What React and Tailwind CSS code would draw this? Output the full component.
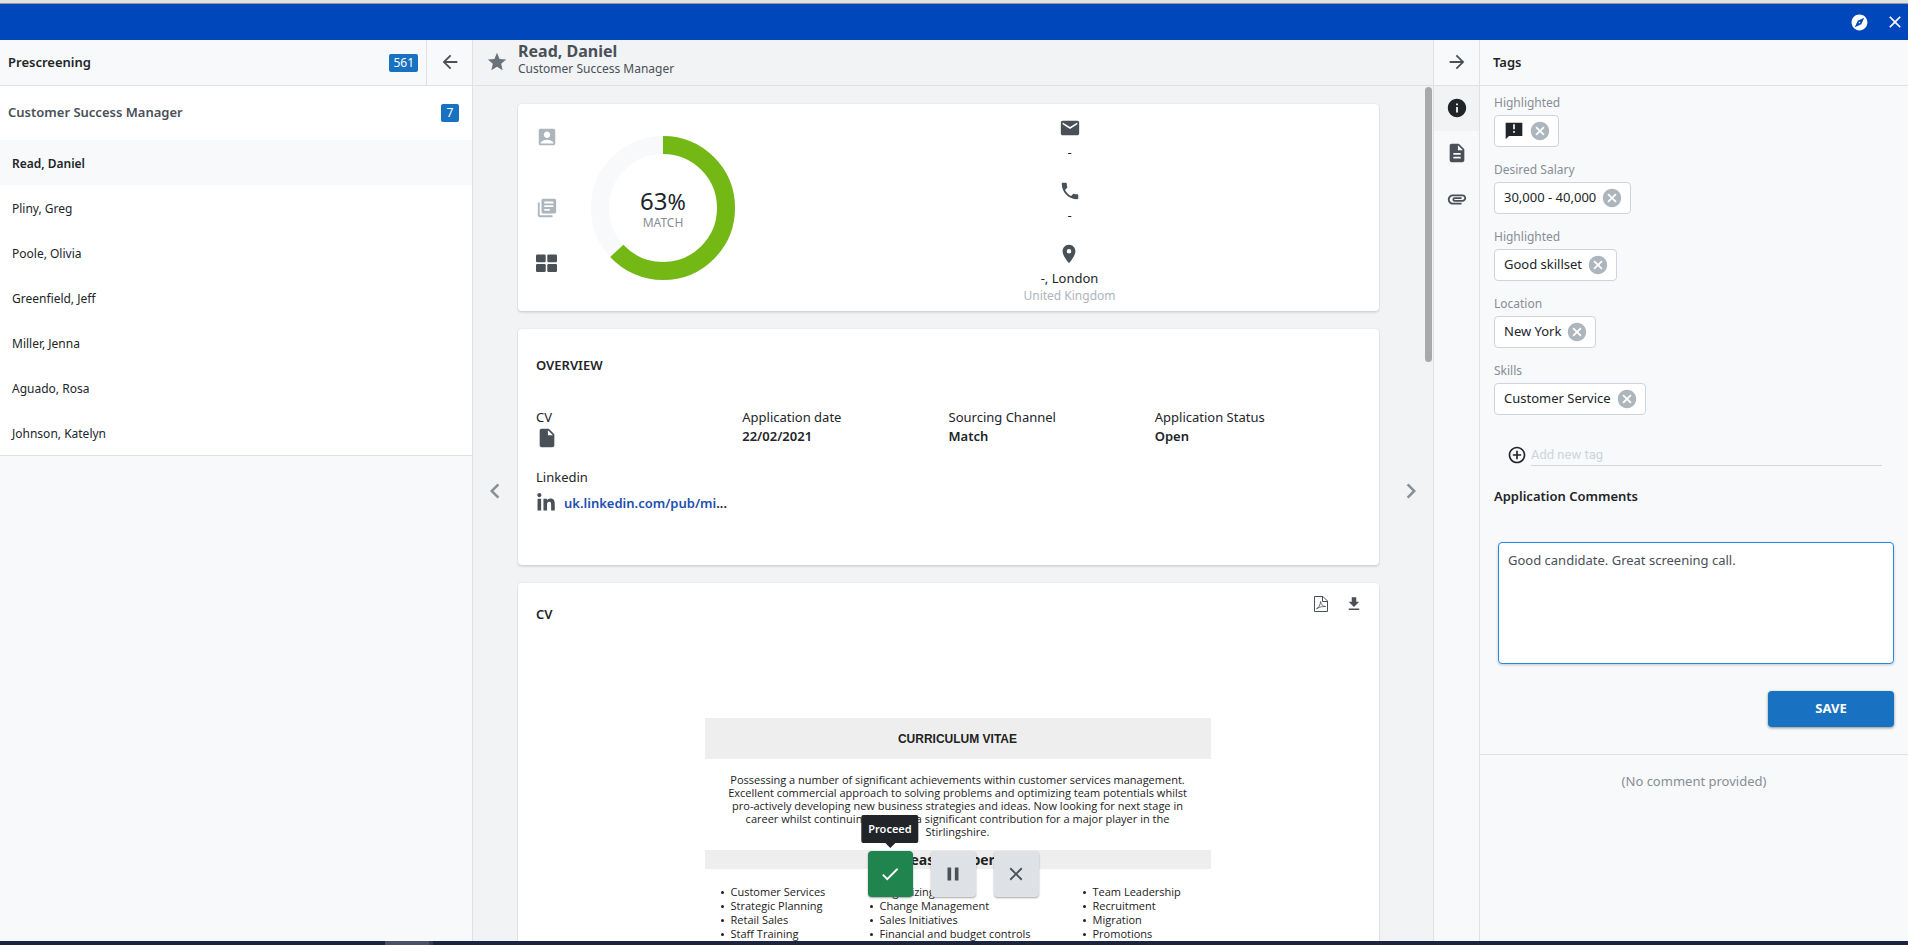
import React from 'react';
import {
  MdAccountBox,
  MdAddCircleOutline,
  MdArrowBack,
  MdArrowForward,
  MdAttachment,
  MdCancel,
  MdCheck,
  MdChevronLeft,
  MdChevronRight,
  MdClose,
  MdDescription,
  MdEmail,
  MdExplore,
  MdInfo,
  MdInsertDriveFile,
  MdLibraryBooks,
  MdPause,
  MdPhone,
  MdPlace,
  MdStar,
} from 'react-icons/md';
import { FaLinkedinIn } from 'react-icons/fa';

const candidates = [
  'Read, Daniel',
  'Pliny, Greg',
  'Poole, Olivia',
  'Greenfield, Jeff',
  'Miller, Jenna',
  'Aguado, Rosa',
  'Johnson, Katelyn',
];

const tags = [
  { label: 'Highlighted', icon: true },
  { label: 'Desired Salary', value: '30,000 - 40,000' },
  { label: 'Highlighted', value: 'Good skillset' },
  { label: 'Location', value: 'New York' },
  { label: 'Skills', value: 'Customer Service' },
];

const summary = [
  'Possessing a number of significant achievements within customer services management.',
  'Excellent commercial approach to solving problems and optimizing team potentials whilst',
  'pro-actively developing new business strategies and ideas. Now looking for next stage in',
  'career whilst continuing to make a significant contribution for a major player in the',
  'Stirlingshire.',
];

const expertise = [
  ['Customer Services', 'Strategic Planning', 'Retail Sales', 'Staff Training'],
  ['Organizing', 'Change Management', 'Sales Initiatives', 'Financial and budget controls'],
  ['Team Leadership', 'Recruitment', 'Migration', 'Promotions'],
];

function TilesIcon() {
  return (
    <svg width="22" height="22" viewBox="0 0 22 22" fill="currentColor" aria-hidden="true">
      <rect x="0" y="2.500" width="9.700" height="7.700" rx="1.200" />
      <rect x="11.300" y="2.500" width="9.700" height="7.700" rx="1.200" />
      <rect x="0" y="12" width="9.700" height="8" rx="1.200" />
      <rect x="11.300" y="12" width="9.700" height="8" rx="1.200" />
    </svg>
  );
}

function AlertIcon() {
  return (
    <svg width="20" height="20" viewBox="0 0 24 24" fill="currentColor" aria-hidden="true">
      <path d="M22 2H2v20l4-4h16V2zm-9 12h-2v-2h2v2zm0-4h-2V4h2v6z" />
    </svg>
  );
}

function PdfIcon() {
  return (
    <svg width="16" height="18" viewBox="0 0 16 18" fill="none" stroke="currentColor" aria-hidden="true">
      <path d="M1.5 1.5h8.5l4.5 4.5v10.5h-13z" />
      <path d="M9.5 1.5v5h5" />
      <path
        d="M3.500 13.800c2.200-1.200 3.800-3.800 4.100-7.300.3 2.600 2 4.900 5 5-2.600-.1-6 .2-9.100 2.300z"
        strokeWidth="0.8"
      />
    </svg>
  );
}

function DownloadIcon() {
  return (
    <svg width="18" height="18" viewBox="0 0 24 24" fill="currentColor" aria-hidden="true">
      <path d="M5 20h14v-2H5v2zM19 9h-4V3H9v6H5l7 7 7-7z" />
    </svg>
  );
}

function TopBar() {
  return (
    <header className="shrink-0">
      <div className="h-1 border-b border-[#999999] bg-[#dfe1e3]" />
      <div className="flex h-9 items-center justify-end gap-4 bg-[#0047bb] pr-[3px] text-white">
        <button aria-label="Explore" type="button">
          <MdExplore size={19} />
        </button>
        <button aria-label="Close" type="button">
          <MdClose size={20} />
        </button>
      </div>
    </header>
  );
}

function Sidebar() {
  return (
    <aside className="w-[473px] shrink-0 border-r border-[#dee2e6] bg-[#f8f9fb]">
      <div className="flex h-[46px] border-b border-[#dee2e6]">
        <div className="flex flex-1 items-center justify-between pr-2 pl-2">
          <h2 className="text-[13px] font-semibold">Prescreening</h2>
          <span className="h-[18px] rounded-xs bg-[#1971c2] px-1 text-[12px] leading-[18px] text-white">
            561
          </span>
        </div>
        <button
          type="button"
          aria-label="Collapse list"
          className="flex w-[46px] items-center justify-center border-l border-[#dee2e6] pb-px text-[#495057]"
        >
          <MdArrowBack size={22} />
        </button>
      </div>
      <div className="border-b border-[#dee2e6] bg-white">
        <div className="flex h-[54px] items-center justify-between pr-[13px] pl-2">
          <h3 className="text-[13px] font-semibold text-[#495057]">Customer Success Manager</h3>
          <span className="h-[18px] w-[18px] rounded-xs bg-[#1971c2] text-center text-[12px] leading-[18px] text-white">
            7
          </span>
        </div>
        <ul>
          {candidates.map((name, i) => (
            <li key={name}>
              <button
                type="button"
                className={
                  i === 0
                    ? 'flex h-[45px] w-full items-center bg-[#f8f9fb] px-3 pt-[2px] text-[12px] font-semibold'
                    : 'flex h-[45px] w-full items-center px-3 pt-[2px] text-[12px]'
                }
              >
                {name}
              </button>
            </li>
          ))}
        </ul>
      </div>
    </aside>
  );
}

function MatchCard() {
  const radius = 63;
  const length = 2 * Math.PI * radius;
  return (
    <section className="flex rounded-sm bg-white shadow-[0_1px_3px_rgba(0,0,0,0.2)]">
      <div className="flex w-[55px] flex-col pt-[22px] pl-[18px] text-[#adb5bd]">
        <button type="button" aria-label="Profile" className="w-[22px]">
          <MdAccountBox size={22} />
        </button>
        <button type="button" aria-label="Documents" className="mt-[49px] w-[22px]">
          <MdLibraryBooks size={22} />
        </button>
        <button type="button" aria-label="Overview tiles" className="mt-[33px] w-[22px] text-[#495057]">
          <TilesIcon />
        </button>
      </div>
      <div className="flex w-[187px] items-center justify-start pl-[18px]">
        <div className="relative">
          <svg width="144" height="144" viewBox="0 0 144 144" fill="none" aria-hidden="true">
            <circle cx="72" cy="72" r={radius} stroke="#f8f9fb" strokeWidth="18" />
            <circle
              cx="72"
              cy="72"
              r={radius}
              stroke="#74b816"
              strokeWidth="18"
              strokeDasharray={`${length * 0.63} ${length}`}
              transform="rotate(-90 72 72)"
            />
          </svg>
          <div className="absolute inset-0 flex flex-col items-center justify-center pt-1">
            <p className="text-[24px] leading-[26px]">
              63<span className="text-[22px]">%</span>
            </p>
            <p className="text-[12px] leading-[18px] text-[#868e96]">MATCH</p>
          </div>
        </div>
      </div>
      <ul className="flex flex-1 flex-col items-center gap-[19px] pt-[13px] pb-[6px] text-[13px] leading-[18px]">
        <li className="flex flex-col items-center gap-1">
          <MdEmail size={22} className="text-[#495057]" />
          <span>-</span>
        </li>
        <li className="flex flex-col items-center gap-1">
          <MdPhone size={22} className="text-[#495057]" />
          <span>-</span>
        </li>
        <li className="flex flex-col items-center">
          <MdPlace size={22} className="mb-1 text-[#495057]" />
          <span>-, London</span>
          <span className="text-[12px] text-[#adb5bd]">United Kingdom</span>
        </li>
      </ul>
    </section>
  );
}

function OverviewCard() {
  return (
    <section className="rounded-sm bg-white px-[18px] pt-[26px] pb-[46px] shadow-[0_1px_3px_rgba(0,0,0,0.2)]">
      <h2 className="text-[13px] leading-5 font-semibold">OVERVIEW</h2>
      <dl className="mt-[33px] grid grid-cols-4 gap-y-[19px] text-[13px] leading-[19px]">
        <div>
          <dt>CV</dt>
          <dd>
            <MdInsertDriveFile size={22} className="text-[#495057]" />
          </dd>
        </div>
        <div>
          <dt>Application date</dt>
          <dd className="font-semibold">22/02/2021</dd>
        </div>
        <div>
          <dt>Sourcing Channel</dt>
          <dd className="font-semibold">Match</dd>
        </div>
        <div>
          <dt>Application Status</dt>
          <dd className="font-semibold">Open</dd>
        </div>
        <div>
          <dt>Linkedin</dt>
          <dd className="flex h-8 items-center gap-2 font-semibold">
            <FaLinkedinIn size={20} className="shrink-0 text-[#495057]" />
            <span>
              <a href="#linkedin" className="text-[#1c4fb0]">
                uk.linkedin.com/pub/mi
              </a>
              ...
            </span>
          </dd>
        </div>
      </dl>
    </section>
  );
}

function CvCard() {
  return (
    <section className="rounded-sm bg-white pt-3 pr-4 pb-10 pl-[18px] shadow-[0_1px_3px_rgba(0,0,0,0.2)]">
      <div className="flex items-start justify-between">
        <h2 className="pt-[10px] text-[13px] leading-[18px] font-semibold">CV</h2>
        <div className="flex gap-4 text-[#495057]">
          <button type="button" aria-label="Open PDF">
            <PdfIcon />
          </button>
          <button type="button" aria-label="Download">
            <DownloadIcon />
          </button>
        </div>
      </div>
      <div className="mt-[95px] pl-4">
        <article className="mx-auto max-w-[506px] font-['Open_Sans',sans-serif] text-[11px] text-[#222222]">
          <h3 className="bg-[#eeeeee] pt-[2px] text-center font-['Liberation_Sans',Arial,sans-serif] text-[12px] leading-[39px] font-bold">
            CURRICULUM VITAE
          </h3>
          <p className="mt-[14px] text-center leading-[13px]">
            {summary.map((line) => (
              <span key={line} className="block whitespace-nowrap">
                {line}
              </span>
            ))}
          </p>
          <h4 className="mt-3 bg-[#eeeeee] text-center text-[14px] leading-[19px] font-bold">
            Areas of Expertise
          </h4>
          <div className="mt-4 grid grid-cols-[149px_213px_1fr] pl-4 leading-[14px]">
            {expertise.map((column) => (
              <ul key={column[0]}>
                {column.map((item) => (
                  <li key={item} className="flex items-center gap-[7px] whitespace-nowrap">
                    <span aria-hidden="true" className="size-[3px] rounded-full bg-[#222222]" />
                    {item}
                  </li>
                ))}
              </ul>
            ))}
          </div>
        </article>
      </div>
    </section>
  );
}

function Actions() {
  return (
    <div className="absolute inset-x-0 bottom-11 flex justify-center gap-[18px] text-[#495057]">
      <div className="relative">
        <div
          role="tooltip"
          className="absolute bottom-[54px] left-1/2 -translate-x-1/2 rounded-xs bg-[#212529] px-[7px] text-[11px] leading-7 font-semibold text-white"
        >
          Proceed
          <svg width="10" height="5" viewBox="0 0 10 5" className="absolute top-full left-1/2 -translate-x-1/2" aria-hidden="true">
            <path d="M0 0h10L5 5z" fill="#212529" />
          </svg>
        </div>
        <button
          type="button"
          aria-label="Proceed"
          className="flex h-[46px] w-[45px] items-center justify-center rounded-sm bg-[#1f844d] text-white shadow-[0_1px_2px_rgba(0,0,0,0.35)]"
        >
          <MdCheck size={22} />
        </button>
      </div>
      <button
        type="button"
        aria-label="Pause"
        className="flex h-[46px] w-[45px] items-center justify-center rounded-sm bg-[#dee2e6] shadow-[0_1px_2px_rgba(0,0,0,0.35)]"
      >
        <MdPause size={22} />
      </button>
      <button
        type="button"
        aria-label="Reject"
        className="flex h-[46px] w-[45px] items-center justify-center rounded-sm bg-[#dee2e6] shadow-[0_1px_2px_rgba(0,0,0,0.35)]"
      >
        <MdClose size={22} />
      </button>
    </div>
  );
}

function Candidate() {
  return (
    <main className="relative flex min-w-0 flex-1 flex-col bg-[#f1f3f5]">
      <div className="flex h-[46px] shrink-0 items-start border-b border-[#dee2e6] text-[#495057]">
        <button type="button" aria-label="Favourite" className="flex h-11 w-[45px] items-center justify-center pl-[2px] text-[#6a727a]">
          <MdStar size={22} />
        </button>
        <div>
          <h1 className="text-[16px] leading-[22px] font-bold">Read, Daniel</h1>
          <p className="text-[12px] leading-[14px]">Customer Success Manager</p>
        </div>
      </div>
      <div className="relative flex min-h-0 flex-1">
        <button type="button" aria-label="Previous candidate" className="flex w-11 items-center justify-center pb-[46px] text-[#868e96]">
          <MdChevronLeft size={30} />
        </button>
        <div className="flex min-w-0 flex-1 flex-col gap-[18px] overflow-y-auto px-px pt-[18px] [scrollbar-width:none]">
          <MatchCard />
          <OverviewCard />
          <CvCard />
        </div>
        <button type="button" aria-label="Next candidate" className="flex w-[53px] items-center justify-center pb-[46px] pl-2 text-[#868e96]">
          <MdChevronRight size={30} />
        </button>
        <div className="absolute top-px right-px h-[275px] w-[7px] rounded bg-[#a8a9ab]" />
      </div>
      <Actions />
    </main>
  );
}

function Rail() {
  return (
    <nav className="w-[47px] shrink-0 border-x border-[#dee2e6] bg-[#f8f9fb] text-[#495057]">
      <button type="button" aria-label="Collapse panel" className="flex h-[46px] w-full items-center justify-center border-b border-[#dee2e6] pb-px">
        <MdArrowForward size={22} />
      </button>
      <button type="button" aria-label="Information" className="flex h-[45px] w-full items-center justify-center bg-[#f1f3f5] pb-px text-[#212529]">
        <MdInfo size={22} />
      </button>
      <button type="button" aria-label="Documents" className="flex h-[45px] w-full items-center justify-center pb-px">
        <MdDescription size={22} />
      </button>
      <button type="button" aria-label="Attachments" className="flex h-[45px] w-full items-center justify-center">
        <MdAttachment size={22} />
      </button>
    </nav>
  );
}

function TagsPanel() {
  return (
    <aside className="w-[428px] shrink-0 bg-[#f8f9fb]">
      <h2 className="h-[46px] border-b border-[#dee2e6] pl-[13px] text-[13px] leading-[45px] font-semibold">Tags</h2>
      <ul className="flex flex-col items-start gap-[14px] pt-2 pl-[14px]">
        {tags.map(({ label, value, icon }) => (
          <li key={`${label}-${value}`}>
            <p className="text-[12px] leading-[18px] text-[#868e96]">{label}</p>
            <div className="mt-[3px] flex h-8 w-fit items-center gap-[5px] rounded-sm border border-[#ced4da] bg-white pr-[7px] pl-[9px] text-[13px]">
              {icon ? <AlertIcon /> : value}
              <button type="button" aria-label={`Remove ${value ?? label}`} className="text-[#adb5bd]">
                <MdCancel size={22} />
              </button>
            </div>
          </li>
        ))}
      </ul>
      <div className="mt-7 flex items-start gap-1 pr-[26px] pl-[27px]">
        <button type="button" aria-label="Add tag" className="pt-[2px]">
          <MdAddCircleOutline size={20} />
        </button>
        <input
          type="text"
          aria-label="New tag"
          placeholder="Add new tag"
          className="h-[23px] min-w-0 flex-1 border-b border-[#d4d8dc] bg-transparent font-['Roboto',sans-serif] text-[13px] outline-none placeholder:text-[#ced4da]"
        />
      </div>
      <form className="border-b border-[#dee2e6] pt-5 pr-[14px] pb-[27px] pl-[18px]">
        <label htmlFor="comment" className="-ml-1 block text-[13px] leading-5 font-semibold">
          Application Comments
        </label>
        <textarea
          id="comment"
          defaultValue="Good candidate. Great screening call."
          className="mt-9 block h-[122px] w-full resize-none rounded-sm border border-[#228be6] bg-white px-[9px] py-2 text-[13px] leading-[18px] text-[#495057] shadow-[0_1px_3px_rgba(0,0,0,0.2)] outline-none"
        />
        <button
          type="button"
          className="mt-[27px] ml-auto block h-9 w-[126px] rounded-sm bg-[#1971c2] text-[13px] font-bold text-white shadow-[0_1px_3px_rgba(0,0,0,0.45)]"
        >
          SAVE
        </button>
      </form>
      <p className="pt-4 text-center text-[13px] leading-5 text-[#868e96]">(No comment provided)</p>
    </aside>
  );
}

export default function App() {
  return (
    <div className="flex h-screen flex-col overflow-hidden bg-[#f8f9fb] font-['Noto_Sans',sans-serif] text-[#212529]">
      <TopBar />
      <div className="flex min-h-0 flex-1">
        <Sidebar />
        <Candidate />
        <Rail />
        <TagsPanel />
      </div>
      <footer className="flex h-1 shrink-0 bg-[#1b2440] pl-[385px]">
        <div className="w-11 bg-[#4a5268]" />
        <div className="w-1 bg-[#343c52]" />
      </footer>
    </div>
  );
}
